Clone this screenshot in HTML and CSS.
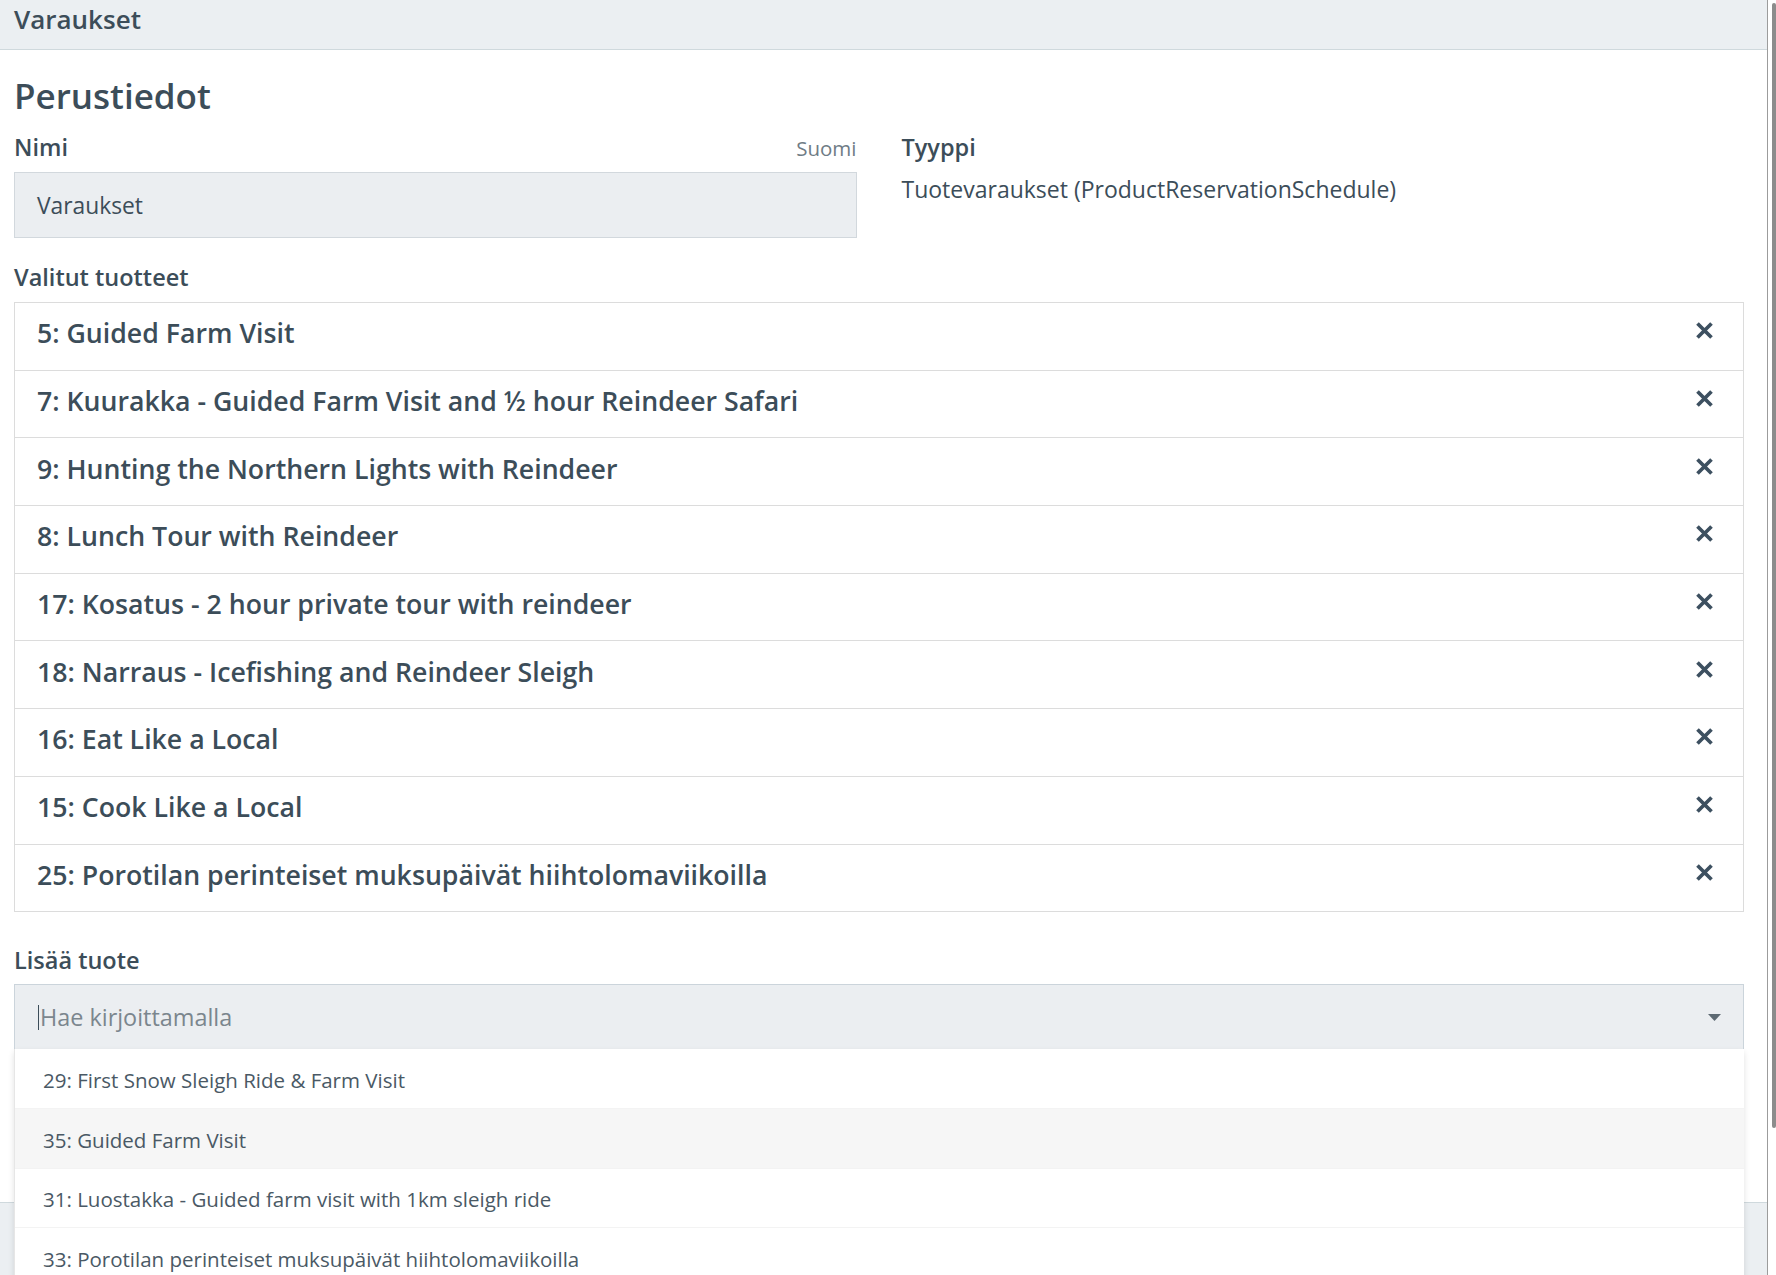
FILE: index.html
```html
<!DOCTYPE html>
<html lang="fi">
<head>
<meta charset="utf-8">
<title>Varaukset</title>
<link rel="stylesheet" href="styles.css">
</head>
<body>
<div class="app">
  <div class="main">
    <header class="topbar">Varaukset</header>
    <div class="content">
      <h1 class="heading">Perustiedot</h1>
      <div class="grid">
        <div class="field">
          <div class="label-row">
            <span class="label">Nimi</span>
            <span class="lang">Suomi</span>
          </div>
          <div class="input">Varaukset</div>
        </div>
        <div class="field">
          <div class="label-row">
            <span class="label">Tyyppi</span>
          </div>
          <div class="value">Tuotevaraukset (ProductReservationSchedule)</div>
        </div>
      </div>

      <div class="label section-label">Valitut tuotteet</div>
      <ul class="selected">
        <li class="item"><span class="item-text">5: Guided Farm Visit</span><span class="remove"><svg viewBox="0 0 17 17" width="17" height="17"><path d="M1.5 1.5L15.5 15.5M15.5 1.5L1.5 15.5"/></svg></span></li>
        <li class="item"><span class="item-text">7: Kuurakka - Guided Farm Visit and ½ hour Reindeer Safari</span><span class="remove"><svg viewBox="0 0 17 17" width="17" height="17"><path d="M1.5 1.5L15.5 15.5M15.5 1.5L1.5 15.5"/></svg></span></li>
        <li class="item"><span class="item-text">9: Hunting the Northern Lights with Reindeer</span><span class="remove"><svg viewBox="0 0 17 17" width="17" height="17"><path d="M1.5 1.5L15.5 15.5M15.5 1.5L1.5 15.5"/></svg></span></li>
        <li class="item"><span class="item-text">8: Lunch Tour with Reindeer</span><span class="remove"><svg viewBox="0 0 17 17" width="17" height="17"><path d="M1.5 1.5L15.5 15.5M15.5 1.5L1.5 15.5"/></svg></span></li>
        <li class="item"><span class="item-text">17: Kosatus - 2 hour private tour with reindeer</span><span class="remove"><svg viewBox="0 0 17 17" width="17" height="17"><path d="M1.5 1.5L15.5 15.5M15.5 1.5L1.5 15.5"/></svg></span></li>
        <li class="item"><span class="item-text">18: Narraus - Icefishing and Reindeer Sleigh</span><span class="remove"><svg viewBox="0 0 17 17" width="17" height="17"><path d="M1.5 1.5L15.5 15.5M15.5 1.5L1.5 15.5"/></svg></span></li>
        <li class="item"><span class="item-text">16: Eat Like a Local</span><span class="remove"><svg viewBox="0 0 17 17" width="17" height="17"><path d="M1.5 1.5L15.5 15.5M15.5 1.5L1.5 15.5"/></svg></span></li>
        <li class="item"><span class="item-text">15: Cook Like a Local</span><span class="remove"><svg viewBox="0 0 17 17" width="17" height="17"><path d="M1.5 1.5L15.5 15.5M15.5 1.5L1.5 15.5"/></svg></span></li>
        <li class="item"><span class="item-text">25: Porotilan perinteiset muksupäivät hiihtolomaviikoilla</span><span class="remove"><svg viewBox="0 0 17 17" width="17" height="17"><path d="M1.5 1.5L15.5 15.5M15.5 1.5L1.5 15.5"/></svg></span></li>
      </ul>

      <div class="label add-label">Lisää tuote</div>
      <div class="select">
        <div class="select-input">
          <span class="caret-line"></span><span class="placeholder">Hae kirjoittamalla</span>
          <svg class="arrow" viewBox="0 0 13 7" width="13" height="7"><path d="M0 0H13L6.5 7Z"/></svg>
        </div>
        <ul class="menu">
          <li class="option">29: First Snow Sleigh Ride &amp; Farm Visit</li>
          <li class="option hover">35: Guided Farm Visit</li>
          <li class="option">31: Luostakka - Guided farm visit with 1km sleigh ride</li>
          <li class="option">33: Porotilan perinteiset muksupäivät hiihtolomaviikoilla</li>
        </ul>
      </div>
    </div>
    <footer class="footer"></footer>
  </div>
  <div class="scrollbar"><div class="thumb"></div></div>
</div>
</body>
</html>
```

FILE: styles.css
```css
html, body {
  margin: 0;
  padding: 0;
  background: #ffffff;
}
body {
  font-family: "Open Sans", "Noto Sans", sans-serif;
  color: #3c4d59;
  overflow: hidden;
}
ul {
  list-style: none;
  margin: 0;
  padding: 0;
}
.app {
  display: flex;
  width: 1776px;
  height: 1275px;
  overflow: hidden;
}
.main {
  width: 1767px;
  height: 1275px;
  display: flex;
  flex-direction: column;
  overflow: hidden;
}
.topbar {
  flex: none;
  box-sizing: border-box;
  height: 50px;
  padding: 0 0 11px 14px;
  line-height: 38px;
  font-size: 26px;
  font-weight: 600;
  background: #ebeff2;
  border-bottom: 1px solid #cfd9dd;
}
.content {
  flex: 1;
  padding: 21.5px 23px 0 14px;
}
.heading {
  margin: 0;
  font-size: 35px;
  line-height: 48px;
  font-weight: 600;
}
.grid {
  display: grid;
  grid-template-columns: 1fr 1fr;
  column-gap: 45px;
  margin-top: 12.5px;
}
.label-row {
  display: flex;
  justify-content: space-between;
  align-items: baseline;
  height: 30px;
}
.label {
  font-size: 23.5px;
  line-height: 30px;
  font-weight: 600;
}
.lang {
  font-size: 20.5px;
  line-height: 30px;
  color: #6f7c86;
}
.input {
  box-sizing: border-box;
  margin-top: 10px;
  height: 66px;
  display: flex;
  align-items: center;
  padding-left: 22px;
  font-size: 22.8px;
  background: #ebeef1;
  border: 1px solid #d2d8dd;
}
.value {
  margin-top: 11.5px;
  font-size: 23px;
  line-height: 30px;
}
.section-label {
  margin-top: 24px;
}
.selected {
  margin-top: 10px;
  border: 1px solid #dcdcdc;
}
.item {
  box-sizing: border-box;
  height: 67.7px;
  display: flex;
  align-items: center;
  justify-content: space-between;
  padding: 0 30px 7px 22px;
  border-top: 1px solid #dcdcdc;
  font-size: 26.7px;
  font-weight: 600;
}
.item:first-child {
  border-top: none;
  height: 66.7px;
}
.remove {
  display: flex;
  margin-bottom: 4px;
}
.remove svg path {
  stroke: #3d5060;
  stroke-width: 3.7;
  fill: none;
}
.add-label {
  margin-top: 33px;
}
.select {
  position: relative;
  margin-top: 9px;
}
.select-input {
  box-sizing: border-box;
  height: 65px;
  display: flex;
  align-items: center;
  padding: 0 22px 0 23px;
  background: #ebeef1;
  border: 1px solid #cbd4db;
  border-bottom: none;
}
.caret-line {
  width: 1px;
  height: 25px;
  background: #3c4d59;
  margin-right: 1px;
}
.placeholder {
  flex: 1;
  font-size: 23.4px;
  color: #7b868e;
}
.arrow path {
  fill: #5d6a73;
}
.menu {
  position: absolute;
  top: 65px;
  left: 0;
  right: 0;
  background: #ffffff;
  box-shadow: 0 3px 6px rgba(0, 0, 0, 0.12);
  border-left: 1px solid #e6e6e6;
  z-index: 5;
}
.option {
  box-sizing: border-box;
  height: 59.7px;
  display: flex;
  align-items: center;
  padding: 3px 0 0 28px;
  font-size: 20.5px;
  color: #4a5965;
  border-bottom: 1px solid #f3f3f3;
}
.option.hover {
  background: #f6f6f6;
}
.footer {
  flex: none;
  height: 72px;
  background: #ebeff2;
  border-top: 1px solid #cfd9dd;
}
.scrollbar {
  position: relative;
  width: 8px;
  height: 1275px;
  border-left: 1px solid #9c9c9c;
  background: #ffffff;
}
.thumb {
  position: absolute;
  top: 3px;
  right: 0;
  width: 4px;
  height: 1125px;
  background: #8c8c8c;
  border-radius: 2px;
}
```
